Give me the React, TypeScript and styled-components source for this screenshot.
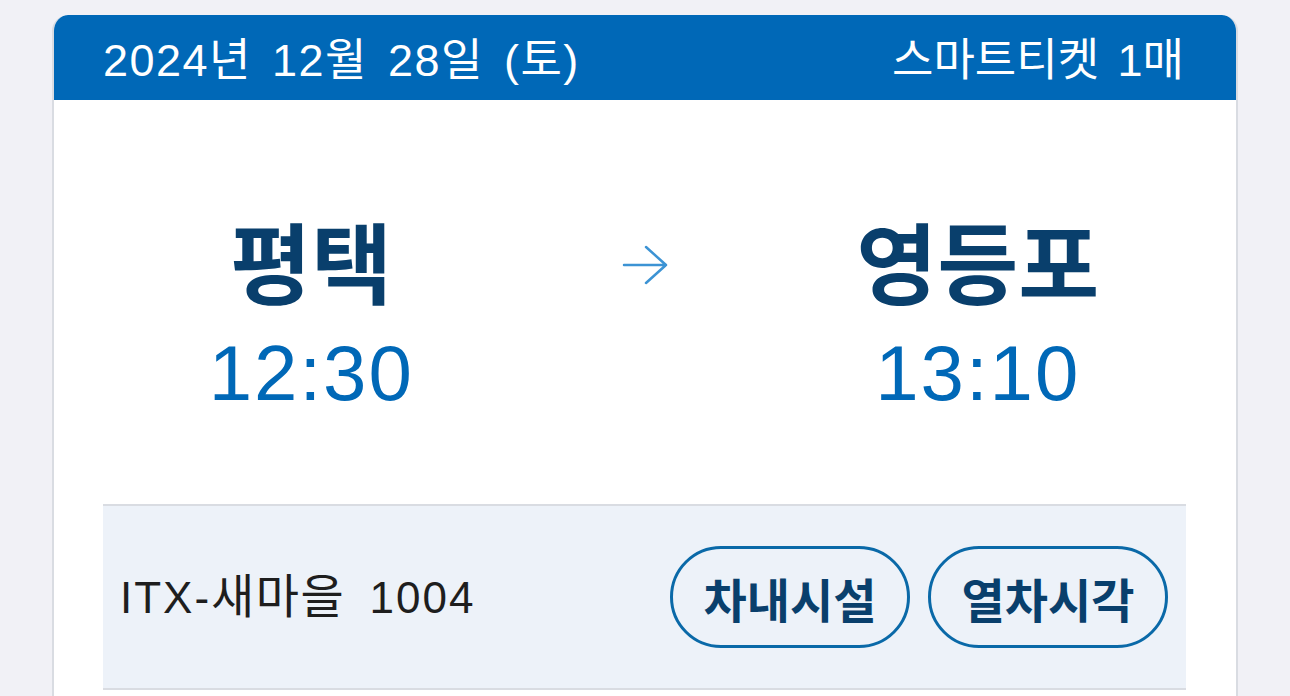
import React from "react";
import styled, { createGlobalStyle } from "styled-components";

const blue = "#0068b7";
const navy = "#093f6c";
const line = "#d9dce2";

const GlobalStyle = createGlobalStyle`
  html, body {
    margin: 0;
    padding: 0;
    background: #f1f1f6;
    font-family: "Liberation Sans", "Noto Sans CJK KR", sans-serif;
    overflow: hidden;
  }
`;

const Page = styled.div`
  padding: 15px 52px 0 52px;
  height: 696px;
  box-sizing: border-box;
`;

const Ticket = styled.div`
  display: flex;
  flex-direction: column;
  background: #ffffff;
  border-radius: 16px 16px 0 0;
  border: 2px solid ${line};
  border-top: none;
  height: 760px;
  overflow: hidden;
`;

const Header = styled.div`
  display: flex;
  align-items: center;
  justify-content: space-between;
  height: 85px;
  padding: 0 54px 0 51px;
  margin: 0 -2px;
  background: ${blue};
  color: #ffffff;
  border-radius: 16px 16px 0 0;
`;

const HeaderText = styled.span<{ $spacing?: number }>`
  font-size: 45px;
  line-height: 1;
  letter-spacing: ${(p) => p.$spacing ?? 1.5}px;
  word-spacing: 6px;
  padding-top: 5px;
`;

const Body = styled.div`
  padding: 0 50px 0 49px;
`;

const Route = styled.div`
  display: grid;
  grid-template-columns: 1fr 250px 1fr;
  align-items: center;
  height: 404px;
  padding-bottom: 6px;
  box-sizing: border-box;
`;

const Stop = styled.div`
  display: flex;
  flex-direction: column;
  align-items: center;
  padding-top: 24px;
`;

const StationName = styled.div`
  font-family: "Noto Sans CJK KR", sans-serif;
  font-weight: 700;
  font-size: 88px;
  line-height: 110px;
  color: ${navy};
`;

const Time = styled.div`
  font-size: 78px;
  line-height: 90px;
  letter-spacing: 2px;
  color: ${blue};
  margin-top: 14px;
`;

const Arrow = styled.div`
  display: flex;
  justify-content: center;
  margin-top: -68px;
`;

const TrainRow = styled.div`
  display: flex;
  align-items: center;
  justify-content: space-between;
  height: 182px;
  padding: 0 18px 0 17px;
  background: #edf2f9;
  border-top: 2px solid ${line};
  border-bottom: 2px solid ${line};
`;

const TrainName = styled.span`
  font-size: 44px;
  line-height: 1;
  color: #1e1e1e;
  letter-spacing: 2px;
  word-spacing: 10px;
  margin-top: -6px;
`;

const TrainType = styled.span`
  font-family: "Noto Sans CJK KR", sans-serif;
  font-size: 47px;
  letter-spacing: 1.5px;
`;

const Actions = styled.div`
  display: flex;
  gap: 18px;
`;

const PillButton = styled.button`
  height: 102px;
  padding: 0 18px;
  min-width: 240px;
  border: 3px solid #0a69a8;
  border-radius: 51px;
  background: transparent;
  color: ${navy};
  font-family: "Noto Sans CJK KR", sans-serif;
  font-size: 47px;
  font-weight: 700;
  cursor: pointer;
`;

function RouteArrow() {
  return (
    <svg width="48" height="42" viewBox="0 0 48 42" fill="none">
      <path
        d="M3 21H45M25 3L45 21L25 39"
        stroke="#3c93d4"
        strokeWidth="2.5"
        strokeLinecap="round"
        strokeLinejoin="round"
      />
    </svg>
  );
}

export default function App() {
  return (
    <Page>
      <GlobalStyle />
      <Ticket>
        <Header>
          <HeaderText>2024년 12월 28일 (토)</HeaderText>
          <HeaderText $spacing={0}>스마트티켓 1매</HeaderText>
        </Header>
        <Body>
          <Route>
            <Stop>
              <StationName>평택</StationName>
              <Time>12:30</Time>
            </Stop>
            <Arrow>
              <RouteArrow />
            </Arrow>
            <Stop>
              <StationName>영등포</StationName>
              <Time>13:10</Time>
            </Stop>
          </Route>
          <TrainRow>
            <TrainName>
              ITX-<TrainType>새마을</TrainType> 1004
            </TrainName>
            <Actions>
              <PillButton>차내시설</PillButton>
              <PillButton>열차시각</PillButton>
            </Actions>
          </TrainRow>
        </Body>
      </Ticket>
    </Page>
  );
}
